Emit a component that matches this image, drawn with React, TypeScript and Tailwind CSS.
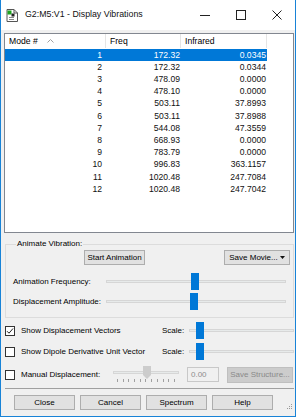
import React from "react";

const rows = [
  [1, "172.32", "0.0345"],
  [2, "172.32", "0.0344"],
  [3, "478.09", "0.0000"],
  [4, "478.10", "0.0000"],
  [5, "503.11", "37.8993"],
  [6, "503.11", "37.8988"],
  [7, "544.08", "47.3559"],
  [8, "668.93", "0.0000"],
  [9, "783.79", "0.0000"],
  [10, "996.83", "363.1157"],
  [11, "1020.48", "247.7084"],
  [12, "1020.48", "247.7042"],
];

function Btn({ label, className = "" }: { label: React.ReactNode; className?: string }) {
  return (
    <div
      className={`h-[15px] bg-[#e1e1e1] border border-[#adadad] flex items-center justify-center text-black ${className}`}
    >
      {label}
    </div>
  );
}

function Slider({ width, offset }: { width: string; offset: string }) {
  return (
    <div className={`relative h-[17px] flex items-center ${width}`}>
      <div className="w-full h-[3px] bg-[#e7eaea] border border-[#d6d6d6]" />
      <div className={`absolute top-0 w-[8px] h-[17px] bg-[#0078d7] ${offset}`} />
    </div>
  );
}

function Check({ checked }: { checked?: boolean }) {
  return (
    <div className="w-[10px] h-[10px] border border-[#333] bg-white flex items-center justify-center">
      {checked && (
        <svg width="8" height="8" viewBox="0 0 8 8">
          <path d="M1 4.2 L3 6.2 L7 1.5" fill="none" stroke="#222" strokeWidth="1" />
        </svg>
      )}
    </div>
  );
}

export default function App() {
  return (
    <div className="w-[300px] h-[418px] bg-white font-['Liberation_Sans',Arial,sans-serif] text-black overflow-hidden">
      <div className="w-[296px] h-[417px] border-x border-b border-[#1883d7] bg-[#f0f0f0] flex flex-col">
        {/* title bar */}
        <div className="h-[30px] bg-white flex items-center shrink-0">
          <svg className="ml-[5px]" width="12" height="13" viewBox="0 0 12 13">
            <path d="M1 0.5 H8 L11.5 4 V12.5 H1 Z" fill="#fff" stroke="#555" />
            <path d="M8 0.5 V4 H11.5" fill="none" stroke="#555" />
            <rect x="1.5" y="1.5" width="4" height="4" fill="#1ea31e" />
            <rect x="5.5" y="4.5" width="3" height="3" fill="#222" />
            <rect x="3" y="8" width="5" height="1" fill="#888" />
            <rect x="3" y="10" width="5" height="1" fill="#888" />
          </svg>
          <span className="ml-[7px] text-[8.8px] text-[#111]">G2:M5:V1 - Display Vibrations</span>
          <div className="ml-auto flex items-center h-full">
            <div className="w-[36px] h-full flex items-center justify-center">
              <div className="w-[10px] h-px bg-[#222]" />
            </div>
            <div className="w-[36px] h-full flex items-center justify-center">
              <div className="w-[10px] h-[10px] border border-[#222]" />
            </div>
            <div className="w-[36px] h-full flex items-center justify-center">
              <svg width="10" height="10" viewBox="0 0 10 10">
                <path d="M0.5 0.5 L9.5 9.5 M9.5 0.5 L0.5 9.5" stroke="#222" strokeWidth="1" />
              </svg>
            </div>
          </div>
        </div>

        {/* list */}
        <div className="ml-[3px] mt-[3px] w-[290px] h-[200px] border border-[#828790] bg-white text-[8.6px] shrink-0">
          <div className="h-[14px] flex items-center text-black">
            <div className="w-[101px] h-full flex items-center border-r border-[#e5e5e5] pl-[4px]">
              Mode #
              <svg className="ml-[9px]" width="7" height="4" viewBox="0 0 7 4">
                <path d="M0.5 3.5 L3.5 0.5 L6.5 3.5" fill="none" stroke="#a0a0a0" />
              </svg>
            </div>
            <div className="w-[75px] h-full flex items-center border-r border-[#e5e5e5] pl-[4px]">Freq</div>
            <div className="w-[86px] h-full flex items-center border-r border-[#e5e5e5] pl-[4px]">Infrared</div>
          </div>
          <div className="mt-[1px]">
            {rows.map(([m, f, ir], i) => (
              <div
                key={m}
                className={`h-[12.2px] w-[262px] flex items-center ${
                  i === 0 ? "bg-[#0078d7] text-white" : "text-[#111]"
                }`}
              >
                <div className="w-[101px] text-right pr-[4px]">{m}</div>
                <div className="w-[75px] text-right pr-[1px]">{f}</div>
                <div className="w-[86px] text-right pr-[1px]">{ir}</div>
              </div>
            ))}
          </div>
        </div>

        <div className="text-[8px]">
          {/* group box */}
          <fieldset className="ml-[4px] mt-[6px] w-[289px] h-[79px] border border-[#dcdcdc] px-[7px]">
            <legend className="ml-[3px] px-[1px] leading-[10px]">Animate Vibration:</legend>
            <div className="flex items-center mt-[1px]">
              <Btn label="Start Animation" className="ml-[71px] w-[61px]" />
              <Btn
                className="ml-auto w-[66px] mr-[-4px]"
                label={
                  <span className="flex items-center">
                    Save Movie...
                    <svg className="ml-[2px]" width="5" height="3" viewBox="0 0 5 3">
                      <path d="M0 0 H5 L2.5 3 Z" fill="#111" />
                    </svg>
                  </span>
                }
              />
            </div>
            <div className="flex items-center mt-[8px]">
              <span className="w-[93px]">Animation Frequency:</span>
              <Slider width="w-[180px]" offset="left-[85px]" />
            </div>
            <div className="flex items-center mt-[3px]">
              <span className="w-[93px]">Displacement Amplitude:</span>
              <Slider width="w-[180px]" offset="left-[84px]" />
            </div>
          </fieldset>

          {/* checkboxes */}
          <div className="ml-[4px] mt-[4px] flex items-center">
            <Check checked />
            <span className="ml-[6px] w-[141px]">Show Displacement Vectors</span>
            <span className="w-[27px]">Scale:</span>
            <Slider width="w-[105px]" offset="left-[7px]" />
          </div>
          <div className="ml-[4px] mt-[4px] flex items-center">
            <Check />
            <span className="ml-[6px] w-[141px]">Show Dipole Derivative Unit Vector</span>
            <span className="w-[27px]">Scale:</span>
            <Slider width="w-[105px]" offset="left-[7px]" />
          </div>
          <div className="ml-[4px] mt-[6px] flex items-center">
            <Check />
            <span className="ml-[6px] w-[92px]">Manual Displacement:</span>
            <div className="w-[66px] h-[17px] flex flex-col">
              <div className="relative h-[12px] flex items-center">
                <div className="w-full h-[3px] bg-[#e7eaea] border border-[#d6d6d6]" />
                <svg className="absolute left-[30px] top-0" width="8" height="13" viewBox="0 0 8 13">
                  <path d="M0 0 H8 V9 L4 13 L0 9 Z" fill="#cccccc" />
                </svg>
              </div>
              <div className="flex justify-between px-[4px] mt-[1px]">
                {Array.from({ length: 11 }).map((_, i) => (
                  <div key={i} className="w-px h-[3px] bg-[#a0a0a0]" />
                ))}
              </div>
            </div>
            <div className="ml-[8px] w-[32px] h-[15px] border border-[#c8c8c8] bg-[#f0f0f0] text-[#8d8d8d] flex items-center pl-[3px]">
              0.00
            </div>
            <div className="ml-[8px] w-[66px] h-[16px] bg-[#cccccc] border border-[#bfbfbf] text-[#8a8a8a] flex items-center justify-center">
              Save Structure...
            </div>
          </div>

          <div className="ml-[4px] mt-[5px] w-[289px] h-px bg-[#a0a0a0]" />

          <div className="flex items-center mt-[6px] ml-[13px] gap-[5px]">
            <Btn label="Close" className="w-[61px]" />
            <Btn label="Cancel" className="w-[61px]" />
            <Btn label="Spectrum" className="w-[61px]" />
            <Btn label="Help" className="w-[61px]" />
            <svg className="ml-auto mr-[2px] mt-[8px]" width="7" height="7" viewBox="0 0 7 7">
              <rect x="5" y="1" width="1" height="1" fill="#999" />
              <rect x="3" y="3" width="1" height="1" fill="#999" />
              <rect x="5" y="3" width="1" height="1" fill="#999" />
              <rect x="1" y="5" width="1" height="1" fill="#999" />
              <rect x="3" y="5" width="1" height="1" fill="#999" />
              <rect x="5" y="5" width="1" height="1" fill="#999" />
            </svg>
          </div>
        </div>
      </div>
    </div>
  );
}
